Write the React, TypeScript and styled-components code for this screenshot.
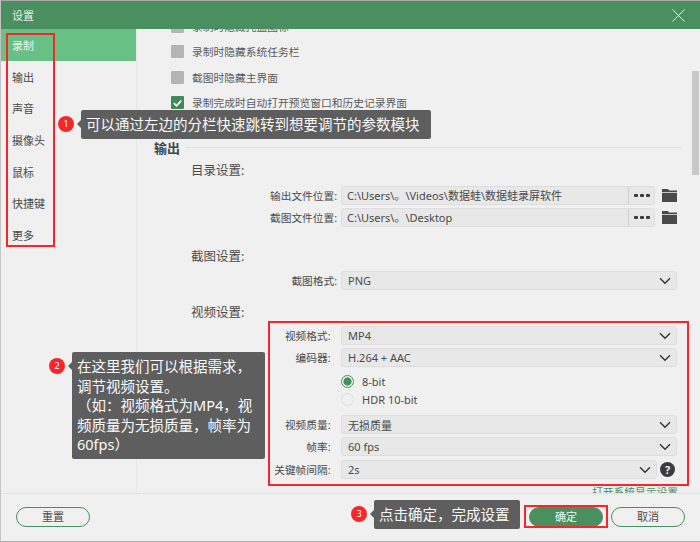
import React from 'react';
import styled, {createGlobalStyle} from 'styled-components';

const GlobalStyle = createGlobalStyle`
    html, body {
        margin: 0;
        padding: 0;
        background: #f0f0f0;
    }
    * {
        box-sizing: border-box;
    }
`;

const FONT = `"Noto Sans", "Noto Sans CJK SC", sans-serif`;

const navItems = ['录制', '输出', '声音', '摄像头', '鼠标', '快捷键', '更多'];

const Chevron = () => (
    <ChevronIcon viewBox="0 0 12 8">
        <path d="M1 1.2 L6 6.2 L11 1.2" fill="none" stroke="#333" strokeWidth="1.4" />
    </ChevronIcon>
);

const FolderGlyph = () => (
    <FolderIcon viewBox="0 0 15 13">
        <path d="M0 0 H6 L7 1.5 H15 V3 H0 Z M0 3.8 H15 V13 H0 Z" fill="#4a4a4a" />
    </FolderIcon>
);

const Select = ({value, short}: any) => (
    <SelectBox $short={short}>
        <span>{value}</span>
        <Chevron />
    </SelectBox>
);

const App = () => {
    return (
        <Window>
            <GlobalStyle />
            <TitleBar>
                <Title>设置</Title>
                <CloseIcon viewBox="0 0 13 13">
                    <path d="M0.5 0.5 L12.5 12.5 M12.5 0.5 L0.5 12.5" stroke="#f2f2f2" strokeWidth="1" fill="none" />
                </CloseIcon>
            </TitleBar>

            <Body>
                <Sidebar>
                    {navItems.map((item, i) => (
                        <NavItem key={item} $active={i === 0}>{item}</NavItem>
                    ))}
                </Sidebar>

                <Main>
                    <Scroller>
                        <CheckRow>
                            <Checkbox />
                            录制时隐藏托盘图标
                        </CheckRow>
                        <CheckRow>
                            <Checkbox />
                            录制时隐藏系统任务栏
                        </CheckRow>
                        <CheckRow>
                            <Checkbox />
                            截图时隐藏主界面
                        </CheckRow>
                        <CheckRow>
                            <Checkbox $checked>
                                <svg viewBox="0 0 14 14" width="14" height="14">
                                    <path d="M3 7.2 L6 10 L11 4.5" fill="none" stroke="#fff" strokeWidth="1.8" />
                                </svg>
                            </Checkbox>
                            录制完成时自动打开预览窗口和历史记录界面
                        </CheckRow>

                        <SectionHeading>
                            <span>输出</span>
                            <Rule />
                        </SectionHeading>

                        <GroupTitle $top={2}>目录设置:</GroupTitle>
                        <FieldRow $top={6}>
                            <FieldLabel>输出文件位置:</FieldLabel>
                            <PathBox>
                                <PathText>C:\Users\。\Videos\数据蛙\数据蛙录屏软件</PathText>
                                <DotsButton><Dot /><Dot /><Dot /></DotsButton>
                            </PathBox>
                            <FolderGlyph />
                        </FieldRow>
                        <FieldRow $top={3}>
                            <FieldLabel>截图文件位置:</FieldLabel>
                            <PathBox>
                                <PathText>C:\Users\。\Desktop</PathText>
                                <DotsButton><Dot /><Dot /><Dot /></DotsButton>
                            </PathBox>
                            <FolderGlyph />
                        </FieldRow>

                        <GroupTitle $top={19}>截图设置:</GroupTitle>
                        <FieldRow $top={5}>
                            <FieldLabel>截图格式:</FieldLabel>
                            <Select value="PNG" />
                        </FieldRow>

                        <GroupTitle $top={12}>视频设置:</GroupTitle>
                        <FieldRow $top={4}>
                            <FieldLabel $tight>视频格式:</FieldLabel>
                            <Select value="MP4" />
                        </FieldRow>
                        <FieldRow $top={3}>
                            <FieldLabel $tight>编码器:</FieldLabel>
                            <Select value="H.264 + AAC" />
                        </FieldRow>
                        <RadioRow $top={5}>
                            <Radio $on />
                            8-bit
                        </RadioRow>
                        <RadioRow>
                            <Radio />
                            HDR 10-bit
                        </RadioRow>
                        <FieldRow $top={7}>
                            <FieldLabel $tight>视频质量:</FieldLabel>
                            <Select value="无损质量" />
                        </FieldRow>
                        <FieldRow $top={3}>
                            <FieldLabel $tight>帧率:</FieldLabel>
                            <Select value="60 fps" />
                        </FieldRow>
                        <FieldRow $top={4}>
                            <FieldLabel $tight>关键帧间隔:</FieldLabel>
                            <Select value="2s" short />
                            <HelpIcon>?</HelpIcon>
                        </FieldRow>
                        <SystemLink>打开系统显示设置</SystemLink>
                    </Scroller>
                    <ScrollThumb />
                </Main>
            </Body>

            <Footer>
                <OutlineButton>重置</OutlineButton>
                <FooterRight>
                    <PrimaryButton>确定</PrimaryButton>
                    <OutlineButton>取消</OutlineButton>
                </FooterRight>
            </Footer>

            <RedBox $x={6} $y={33} $w={49} $h={214} />
            <RedBox $x={268} $y={321} $w={421} $h={165} />
            <RedBox $x={524} $y={505} $w={84} $h={23} />

            <Callout $x={58} $y={110} $w={373} $h={29}>
                <Badge>1</Badge>
                <Bubble $big>可以通过左边的分栏快速跳转到想要调节的参数模块</Bubble>
            </Callout>
            <Callout $x={49} $y={352} $w={216} $h={107}>
                <Badge>2</Badge>
                <Bubble>
                    在这里我们可以根据需求，
                    <br />
                    调节视频设置。
                    <br />
                    （如：视频格式为MP4，视
                    <br />
                    频质量为无损质量，帧率为
                    <br />
                    60fps）
                </Bubble>
            </Callout>
            <Callout $x={351} $y={500} $w={169} $h={29}>
                <Badge>3</Badge>
                <Bubble $big>点击确定，完成设置</Bubble>
            </Callout>
        </Window>
    );
};

export default App;

const Window = styled.div`
    position: relative;
    display: flex;
    flex-direction: column;
    width: 700px;
    height: 542px;
    overflow: hidden;
    background: #f0f0f0;
    border-top: 1px solid #a9a9a9;
    border-left: 1px solid #c4c4c4;
    border-bottom: 1px solid #a9a9a9;
    font-family: ${FONT};
    color: #4a4a4a;
`;

const TitleBar = styled.div`
    display: flex;
    flex: none;
    align-items: center;
    justify-content: space-between;
    height: 28px;
    padding: 0 15px 0 11px;
    background: #4a8f5f;
`;

const Title = styled.div`
    color: #e6efe9;
    font-size: 11px;
`;

const CloseIcon = styled.svg`
    width: 13px;
    height: 13px;
`;

const Body = styled.div`
    display: flex;
    flex: 1;
    min-height: 0;
`;

const Sidebar = styled.div`
    flex: none;
    width: 136px;
    border-right: 1px solid #e6e6e6;
`;

const NavItem = styled.div<{$active?: boolean}>`
    display: flex;
    align-items: center;
    height: 31.7px;
    padding-left: 11px;
    font-size: 11px;
    color: ${props => props.$active ? '#eaf6ee' : '#4a4a4a'};
    background: ${props => props.$active ? '#69c084' : 'transparent'};
`;

const Main = styled.div`
    position: relative;
    flex: 1;
    min-width: 0;
    overflow: hidden;
`;

const Scroller = styled.div`
    padding: 0 22px 0 17px;
    margin-top: -15px;
`;

const ScrollThumb = styled.div`
    position: absolute;
    right: 1px;
    top: 42px;
    width: 7px;
    height: 104px;
    background: #c8c8c8;
`;

const CheckRow = styled.div`
    display: flex;
    align-items: center;
    gap: 8px;
    height: 25.3px;
    padding-left: 17px;
    font-size: 10.75px;
    color: #5a5a5a;
`;

const Checkbox = styled.span<{$checked?: boolean}>`
    display: flex;
    align-items: center;
    justify-content: center;
    flex: none;
    width: 13px;
    height: 13px;
    border-radius: 1px;
    background: ${props => props.$checked ? '#3f8a58' : '#b4b4b4'};
`;

const SectionHeading = styled.div`
    display: flex;
    align-items: center;
    gap: 5px;
    height: 20px;
    margin-top: 23px;
    margin-right: -3px;
    padding-bottom: 2px;
    font-size: 13px;
    font-weight: 700;
    color: #444;
`;

const Rule = styled.div`
    flex: 1;
    height: 1px;
    background: #e2e2e2;
`;

const GroupTitle = styled.div<{$top: number}>`
    display: flex;
    align-items: center;
    height: 20px;
    margin-top: ${props => props.$top}px;
    padding-left: 37px;
    padding-bottom: 2px;
    font-size: 12.5px;
    color: #4a4a4a;
`;

const FieldRow = styled.div<{$top: number}>`
    display: flex;
    align-items: center;
    height: 19px;
    margin-top: ${props => props.$top}px;
`;

const FieldLabel = styled.div<{$tight?: boolean}>`
    flex: none;
    width: 187px;
    padding-right: ${props => props.$tight ? '10.5px' : '4px'};
    font-size: 10.7px;
    text-align: right;
    white-space: nowrap;
    color: #4a4a4a;
`;

const PathBox = styled.div`
    display: flex;
    align-items: stretch;
    width: 314px;
    height: 19px;
    background: #e8e8e8;
    border: 1px solid #dedede;
    border-radius: 3px;
`;

const PathText = styled.div`
    flex: 1;
    padding-left: 5px;
    font-size: 11px;
    line-height: 17px;
    white-space: nowrap;
`;

const DotsButton = styled.div`
    display: flex;
    flex: none;
    align-items: center;
    justify-content: center;
    gap: 2px;
    width: 26px;
    border-left: 1px solid #cfcfcf;
`;

const Dot = styled.span`
    width: 4px;
    height: 3px;
    border-radius: 1px;
    background: #3a3a3a;
`;

const FolderIcon = styled.svg`
    flex: none;
    width: 15px;
    height: 13px;
    margin-left: 7px;
`;

const SelectBox = styled.div<{$short?: boolean}>`
    display: flex;
    flex: none;
    align-items: center;
    justify-content: space-between;
    width: ${props => props.$short ? '316px' : '336px'};
    height: 19px;
    padding: 0 5px 0 6px;
    background: #e8e8e8;
    border: 1px solid #dedede;
    border-radius: 3px;
    font-size: 11px;
`;

const ChevronIcon = styled.svg`
    flex: none;
    width: 12px;
    height: 8px;
`;

const HelpIcon = styled.div`
    flex: none;
    width: 15px;
    height: 15px;
    margin-left: 3px;
    border-radius: 50%;
    background: #3c3c3c;
    color: #f0f0f0;
    font-size: 11px;
    font-weight: 700;
    line-height: 15px;
    text-align: center;
`;

const RadioRow = styled.div<{$top?: number}>`
    display: flex;
    align-items: center;
    gap: 8px;
    height: 18px;
    margin-top: ${props => props.$top || 0}px;
    padding-left: 187px;
    font-size: 11px;
`;

const Radio = styled.span<{$on?: boolean}>`
    flex: none;
    width: 13px;
    height: 13px;
    border-radius: 50%;
    border: 1px solid ${props => props.$on ? '#4a8f5f' : '#dcdcdc'};
    background: ${props => props.$on ? 'radial-gradient(circle, #4a8f5f 0 3.8px, #f0f0f0 4.4px)' : '#f0f0f0'};
`;

const SystemLink = styled.div`
    margin-top: 6px;
    font-size: 10.75px;
    line-height: 14px;
    text-align: right;
    color: #4a8f5f;
`;

const Footer = styled.div`
    display: flex;
    flex: none;
    align-items: flex-start;
    justify-content: space-between;
    height: 48px;
    padding: 13px 15px 0 15px;
    border-top: 1px solid #e2e2e2;
`;

const FooterRight = styled.div`
    display: flex;
    gap: 8px;
`;

const OutlineButton = styled.div`
    width: 74px;
    height: 20px;
    border: 1px solid #4a8f5f;
    border-radius: 10px;
    font-size: 11px;
    line-height: 18px;
    text-align: center;
    color: #4a4a4a;
`;

const PrimaryButton = styled(OutlineButton)`
    background: #4a8f5f;
    color: #eef5f0;
`;

const RedBox = styled.div<{$x: number, $y: number, $w: number, $h: number}>`
    position: absolute;
    left: ${props => props.$x - 1}px;
    top: ${props => props.$y - 1}px;
    width: ${props => props.$w}px;
    height: ${props => props.$h}px;
    border: 2px solid #f5272c;
`;

const Callout = styled.div<{$x: number, $y: number, $w: number, $h: number}>`
    position: absolute;
    left: ${props => props.$x - 1}px;
    top: ${props => props.$y - 1}px;
    width: ${props => props.$w}px;
    height: ${props => props.$h}px;
    display: flex;
    align-items: flex-start;
    gap: 7px;
`;

const Badge = styled.div`
    flex: none;
    width: 16px;
    height: 16px;
    margin-top: 6px;
    border-radius: 50%;
    background: #f5272c;
    color: #fff;
    font-size: 9px;
    line-height: 16px;
    text-align: center;
`;

const Bubble = styled.div<{$big?: boolean}>`
    position: relative;
    flex: 1;
    height: 100%;
    padding: ${props => props.$big ? '0 5px' : '5px 5px 0'};
    background: #5e5e5e;
    border-radius: 2px;
    color: #fbfbfb;
    font-size: 14.5px;
    line-height: ${props => props.$big ? '29px' : '19.6px'};
    white-space: nowrap;

    &::before {
        content: '';
        position: absolute;
        left: -4px;
        top: 10px;
        border-style: solid;
        border-width: 4px 4px 4px 0;
        border-color: transparent #5e5e5e transparent transparent;
    }
`;
